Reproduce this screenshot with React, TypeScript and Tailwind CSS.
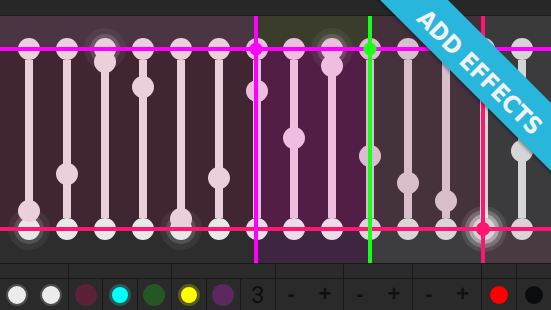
const zones = [
  { w: "w-[256px]", top: "bg-[#4a3542]", mid: "bg-[#3f2632]", bot: "bg-[#2d2d2d]" },
  { w: "w-[114px]", top: "bg-[#3b3d2c]", mid: "bg-[#521e46]", bot: "bg-[#3f2640]" },
  { w: "w-[113px]", top: "bg-[#44303a]", mid: "bg-[#46323c]", bot: "bg-[#3d3c3e]" },
  { w: "flex-1", top: "bg-[#3a3a3a]", mid: "bg-[#3b3a3c]", bot: "bg-[#4a3a42]" },
];

const A = { track: "bg-[#f2d6e2]", end: "bg-[#f0f0f0]" };
const B = { track: "bg-[#f5c4e6]", end: "bg-[#f6e2f0]" };
const C = { track: "bg-[#e0c4d2]", end: "bg-[#e2dcdf]" };
const D = { track: "bg-[#dcdcdc]", end: "bg-[#e2dadf]" };

const soft =
  "shadow-[0_0_0_4px_rgba(255,255,255,0.14),0_0_0_10px_rgba(255,255,255,0.06)]";
const strong =
  "shadow-[0_0_0_4px_rgba(255,255,255,0.4),0_0_0_8px_rgba(255,255,255,0.22),0_0_0_12px_rgba(255,255,255,0.1)]";

// knob = center of the middle knob, measured from the top of the slider area
const sliders = [
  { ...A, knob: 195, bottomGlow: soft },
  { ...A, knob: 158 },
  { ...A, knob: 46, topGlow: soft },
  { ...A, knob: 71 },
  { ...A, knob: 203, bottomGlow: soft },
  { ...A, knob: 162 },
  { ...B, knob: 75 },
  { ...B, knob: 122 },
  { ...B, knob: 50, topGlow: soft },
  { ...C, knob: 140 },
  { ...C, knob: 167 },
  { ...C, knob: 185 },
  { ...D, knob: 213, bottomGlow: strong },
  { ...D, knob: 135 },
];

type S = (typeof sliders)[number] & { topGlow?: string; bottomGlow?: string };

function Slider({ s }: { s: S }) {
  return (
    <div className="relative flex flex-1 flex-col items-center pt-[22px] opacity-[0.96]">
      <div className={`size-[22px] rounded-full ${s.track} ${s.topGlow ?? ""}`} />
      <div className={`h-[158px] w-[8px] ${s.track}`} />
      <div className={`size-[22px] rounded-full ${s.end} ${s.bottomGlow ?? ""}`} />
      <div
        className={`absolute left-1/2 size-[22px] -translate-x-1/2 -translate-y-1/2 rounded-full ${s.track}`}
        style={{ top: s.knob }}
      />
    </div>
  );
}

function Dot({ color }: { color: string }) {
  return <div className={`size-[22px] rounded-full ${color}`} />;
}

function PlusMinus() {
  return (
    <div className="col-span-2 flex items-center justify-around border-r border-[#171717] pb-[2px] font-['Liberation_Sans',sans-serif] text-[22px] font-bold leading-none text-[#111]">
      <span>-</span>
      <span>+</span>
    </div>
  );
}

export default function App() {
  return (
    <div className="relative h-[310px] w-[551px] overflow-hidden bg-[#2a2a2a]">
      {/* top bar */}
      <div className="h-[16px] border-b border-[#1b1b1b] bg-[#272727]" />

      {/* slider area */}
      <div className="relative h-[247px]">
        <div className="absolute inset-0 flex">
          {zones.map((z, i) => (
            <div key={i} className={`flex flex-col ${z.w}`}>
              <div className={`h-[33px] ${z.top}`} />
              <div className={`flex-1 ${z.mid}`} />
              <div className={`h-[34px] ${z.bot}`} />
            </div>
          ))}
        </div>

        <div className="absolute inset-0 flex px-[10.5px]">
          {sliders.map((s, i) => (
            <Slider key={i} s={s as S} />
          ))}
        </div>

        {/* cursor lines */}
        <div className="absolute inset-x-0 top-[31px] h-[4px] bg-[#ff00ff]" />
        <div className="absolute inset-x-0 top-[211px] h-[4px] bg-[#ff1672]" />
        <div className="absolute inset-y-0 left-[254px] w-[4px] bg-[#ff00ff]" />
        <div className="absolute inset-y-0 left-[368px] w-[4px] bg-[#19ff19]" />
        <div className="absolute inset-y-0 left-[481px] w-[4px] bg-[#ff1672]" />
        <div className="absolute left-[256px] top-[33px] size-[13px] -translate-x-1/2 -translate-y-1/2 rounded-full bg-[#ff00ff]" />
        <div className="absolute left-[370px] top-[33px] size-[13px] -translate-x-1/2 -translate-y-1/2 rounded-full bg-[#19ff19]" />
        <div className="absolute left-[483px] top-[213px] size-[14px] -translate-x-1/2 -translate-y-1/2 rounded-full bg-[#ff1672]" />
      </div>

      {/* toolbar */}
      <div className="grid grid-cols-16 border-t border-[#171717]">
        <div className="col-span-2 h-[15px] border-r border-b border-[#171717]" />
        <div className="col-span-3 h-[15px] border-r border-b border-[#171717]" />
        <div className="col-span-3 h-[15px] border-r border-b border-[#171717]" />
        <div className="col-span-2 h-[15px] border-r border-b border-[#171717]" />
        <div className="col-span-2 h-[15px] border-r border-b border-[#171717]" />
        <div className="col-span-2 h-[15px] border-r border-b border-[#171717]" />
        <div className="h-[15px] border-r border-b border-[#171717]" />
        <div className="h-[15px] border-b border-[#171717]" />

        <div className="col-span-2 flex h-[31px] items-center justify-around border-r border-[#171717]">
          <div className="size-[22px] rounded-full border-2 border-[#4d4d4d] bg-[#ececec]" />
          <div className="size-[22px] rounded-full border-2 border-[#4d4d4d] bg-[#ececec]" />
        </div>
        <div className="flex items-center justify-center border-r border-[#171717]">
          <Dot color="bg-[#5a2239]" />
        </div>
        <div className="flex items-center justify-center border-r border-[#171717]">
          <div className="size-[22px] rounded-full border-[3px] border-[#2a5757] bg-[#00ffff]" />
        </div>
        <div className="flex items-center justify-center border-r border-[#171717]">
          <Dot color="bg-[#255726]" />
        </div>
        <div className="flex items-center justify-center border-r border-[#171717]">
          <div className="size-[22px] rounded-full border-[3px] border-[#5c5a22] bg-[#ffff00]" />
        </div>
        <div className="flex items-center justify-center border-r border-[#171717]">
          <Dot color="bg-[#5b2960]" />
        </div>
        <div className="flex items-center justify-center border-r border-[#171717] font-['Roboto',sans-serif] text-[24px] leading-none text-[#0e0e0e]">
          3
        </div>
        <PlusMinus />
        <PlusMinus />
        <PlusMinus />
        <div className="flex items-center justify-center border-r border-[#171717]">
          <div className="size-[18px] rounded-full bg-[#ff0000]" />
        </div>
        <div className="flex items-center justify-center">
          <div className="size-[18px] rounded-full bg-[#0a0c0e]" />
        </div>
      </div>

      {/* ribbon */}
      <div className="absolute left-[333px] top-[45px] flex h-[48px] w-[300px] rotate-45 items-center justify-center bg-[#28b6dc] shadow-[0_2px_3px_rgba(0,0,0,0.35)]">
        <span className="translate-y-[5px] font-['DejaVu_Sans_Condensed',sans-serif] text-[24px] font-bold leading-none text-[#f2f2f2]">
          ADD EFFECTS
        </span>
      </div>
    </div>
  );
}
